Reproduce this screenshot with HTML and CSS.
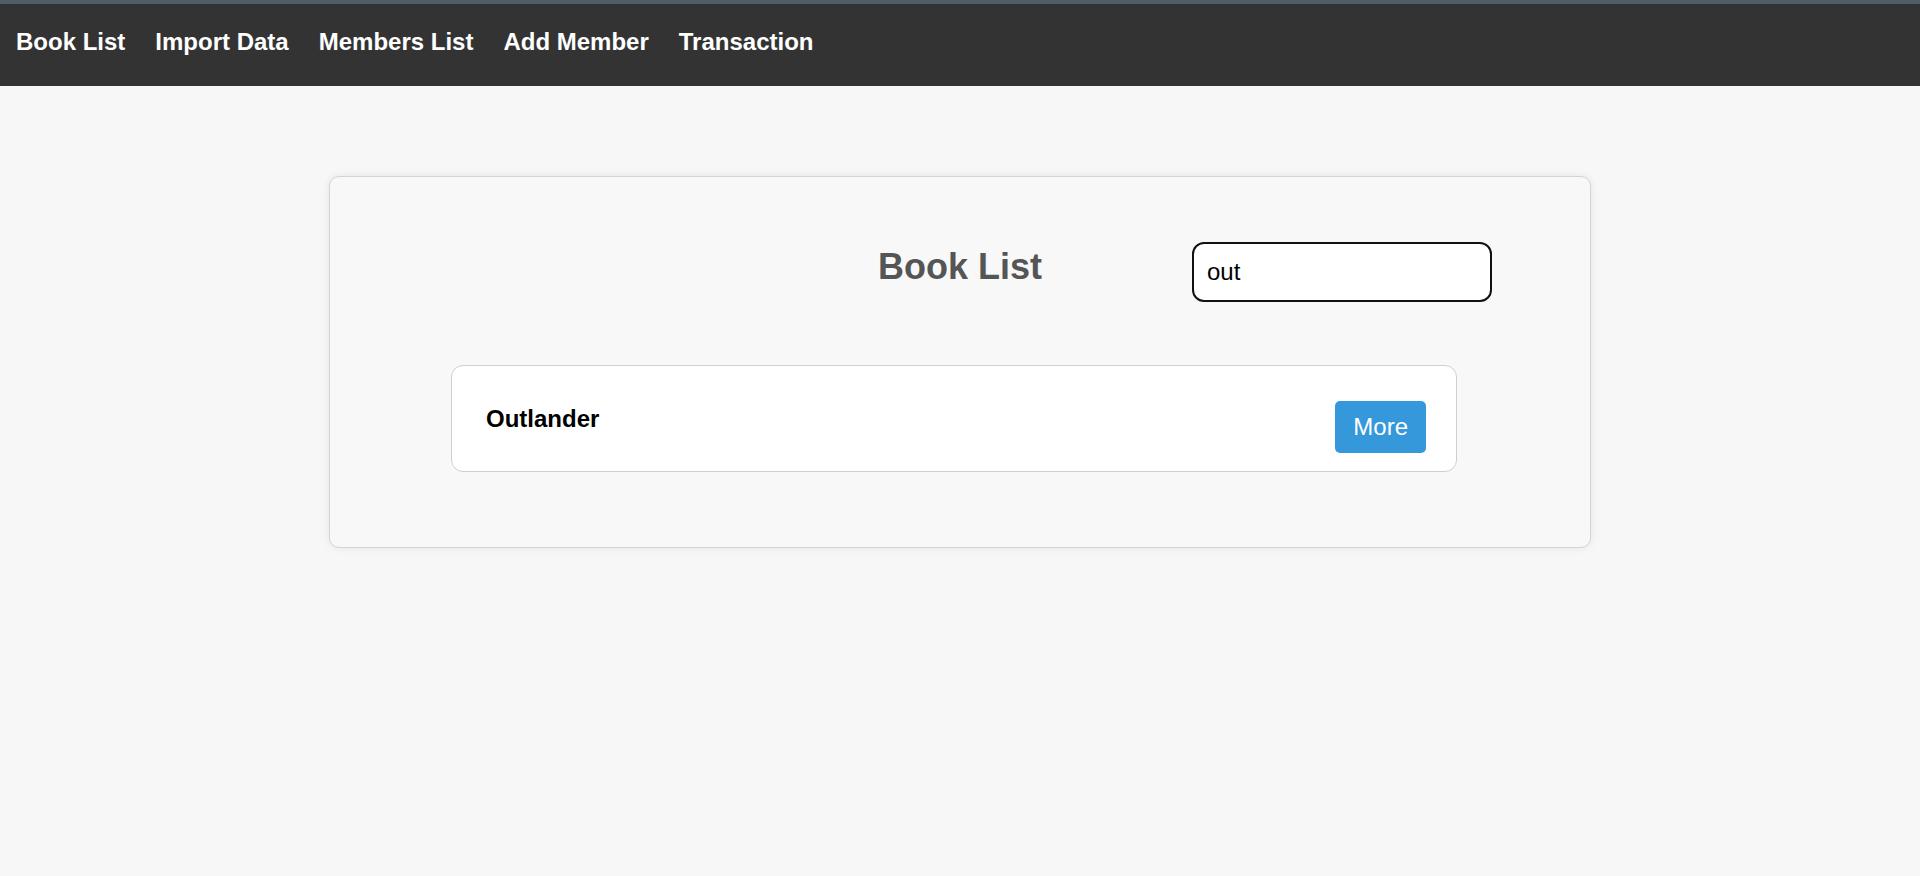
FILE: index.html
```html
<!DOCTYPE html>
<html lang="en">
<head>
<meta charset="utf-8">
<title>Book List</title>
<link rel="stylesheet" href="styles.css">
</head>
<body>
<nav class="topnav">
  <a class="nav-link" href="#">Book List</a>
  <a class="nav-link" href="#">Import Data</a>
  <a class="nav-link" href="#">Members List</a>
  <a class="nav-link" href="#">Add Member</a>
  <a class="nav-link" href="#">Transaction</a>
</nav>
<main class="panel">
  <div class="panel-head">
    <h2 class="title">Book List</h2>
    <input class="search" type="text" value="out" autofocus>
  </div>
  <ul class="book-list">
    <li class="book-item">
      <h3 class="book-title">Outlander</h3>
      <button class="more-btn">More</button>
    </li>
  </ul>
</main>
</body>
</html>
```
FILE: styles.css
```css
html, body {
  margin: 0;
  padding: 0;
}
body {
  background: #f7f7f7;
  font-family: "Liberation Sans", Arial, sans-serif;
  min-height: 876px;
}
.topnav {
  display: flex;
  gap: 30px;
  background: #333333;
  border-top: 4px solid #4f5d68;
  box-sizing: border-box;
  height: 86px;
  padding: 24px 0 0 16px;
}
.nav-link {
  color: #ffffff;
  text-decoration: none;
  font-weight: bold;
  font-size: 24px;
  line-height: 28px;
}
.panel {
  box-sizing: content-box;
  width: 1200px;
  margin: 90px auto 0;
  padding: 30px;
  background: #f8f8f8;
  border: 1px solid #d4d4d4;
  border-radius: 10px;
  box-shadow: 0 0 8px rgba(0, 0, 0, 0.08);
  height: 310px;
}
.panel-head {
  display: grid;
  grid-template-columns: 1fr auto 1fr;
  margin-top: 35px;
  height: 60px;
}
.title {
  grid-column: 2;
  margin: 4px 0 0;
  font-size: 36px;
  line-height: 41px;
  color: #555555;
  font-weight: bold;
  align-self: start;
}
.search {
  grid-column: 3;
  justify-self: end;
  margin-right: 68px;
  box-sizing: border-box;
  width: 300px;
  height: 60px;
  border: 2px solid #111111;
  border-radius: 12px;
  padding: 0 13px;
  font-family: "Liberation Sans", Arial, sans-serif;
  font-size: 24px;
  color: #000000;
  background: #ffffff;
  outline: none;
}
.book-list {
  list-style: none;
  margin: 63px 0 0 91px;
  padding: 0;
  width: 1006px;
}
.book-item {
  display: flex;
  align-items: center;
  justify-content: space-between;
  background: #ffffff;
  border: 1px solid #cfcfcf;
  border-radius: 12px;
  padding: 18px 30px 18px 34px;
  height: 69px;
}
.book-title {
  margin: 0;
  font-size: 24px;
  line-height: 28px;
  font-weight: bold;
  color: #000000;
}
.more-btn {
  margin-top: 17px;
  height: 52px;
  padding: 0 18px;
  border: none;
  border-radius: 5px;
  background: #3498db;
  color: #ffffff;
  font-family: "Liberation Sans", Arial, sans-serif;
  font-size: 24px;
}
```
